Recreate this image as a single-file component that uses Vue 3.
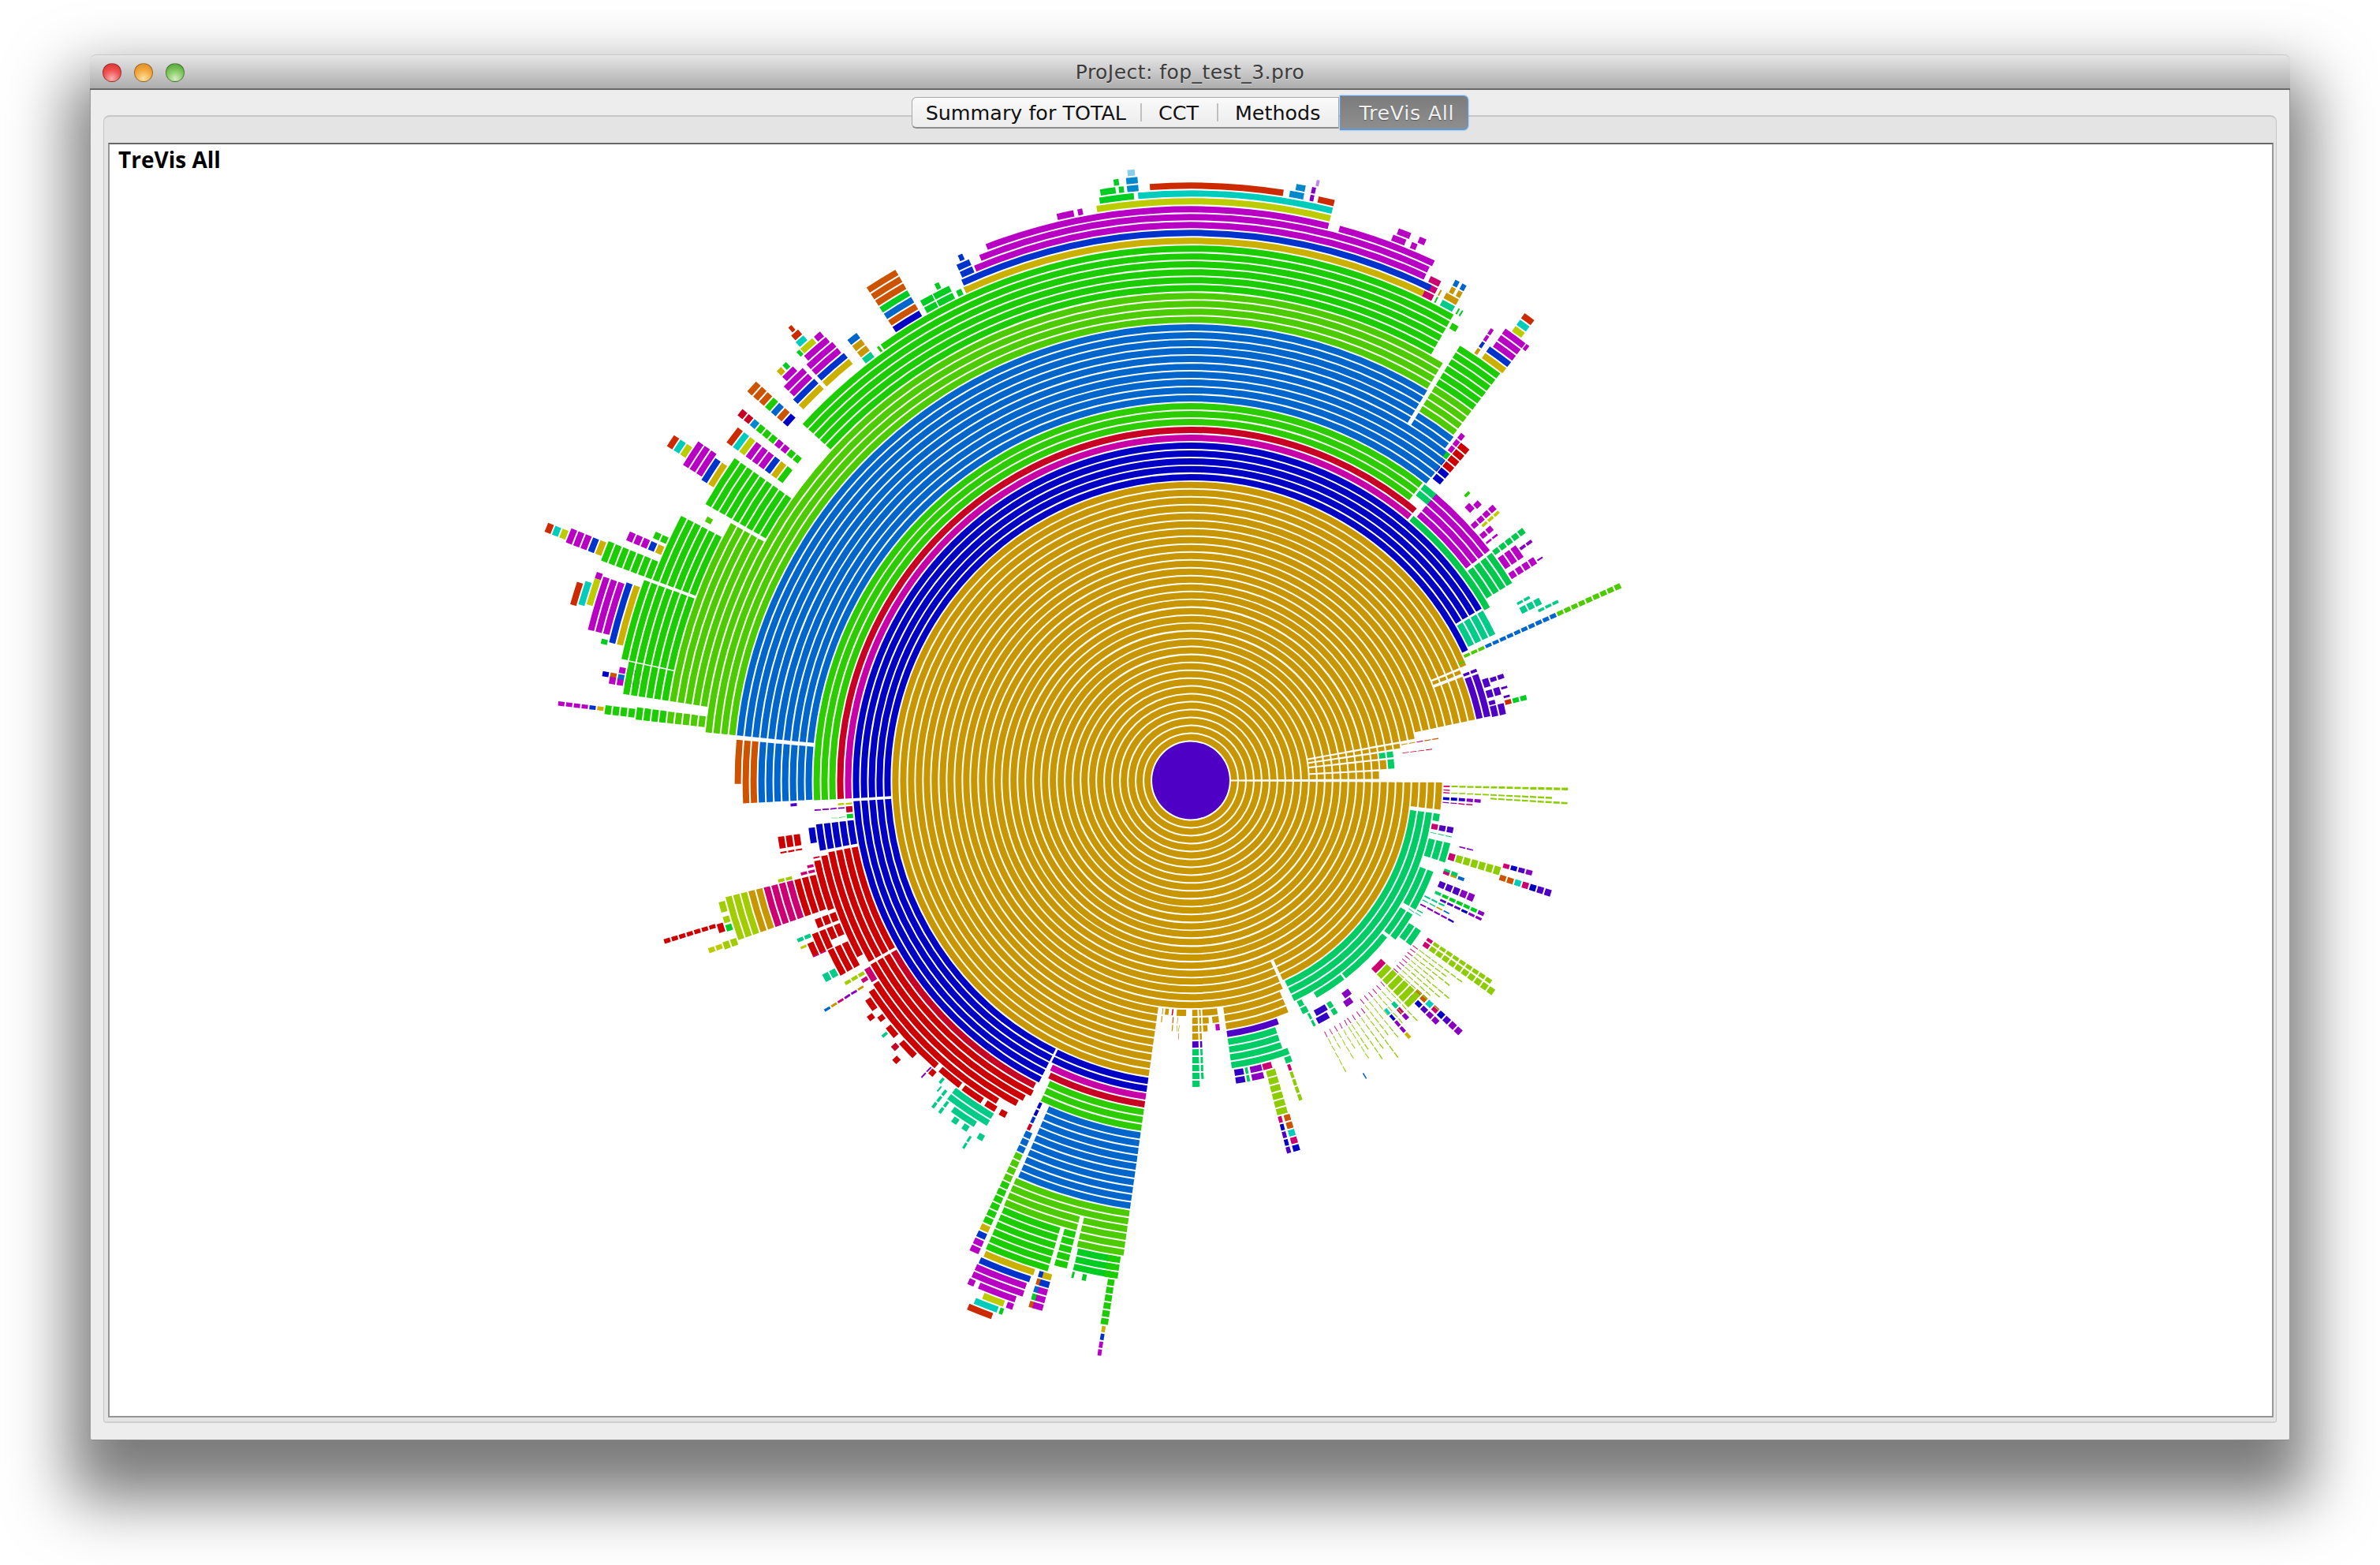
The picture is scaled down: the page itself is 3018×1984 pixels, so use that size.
<script setup>
const CX = 1510.5, CY = 990, BASE = 55, STEP = 10, GAP = 0.75
const palette = {
  A:'#c89600', B:'#0000c4', M:'#c800a8', C:'#c80024', g:'#2ccc00', L:'#0066cc', l:'#4ccc00', h:'#1acc00',
  y:'#ccb000', d:'#0033cc', m:'#b800c4', o:'#bccc00', t:'#00ccbb', r:'#cc2a00', O:'#cc5400', R:'#cc0000',
  s:'#00cc66', T:'#00cc88', p:'#4e00c4', P:'#8ccc00', k:'#cc0070', v:'#8800c0', e:'#00cc22', i:'#3000c4',
  j:'#0088cc', J:'#88ccee', a:'#a0cc00', V:'#c088ee', f:'#00c84c'
}
const rows = [
  // gold core
  [0.3,359.7,0,'A10'],[0.3,349.6,10,'A10'],[0.3,65.4,20,'A3'],[66,349.6,20,'A3'],[0.3,6.8,23,'A4'],[66,349.6,23,'A'],
  [98,348,24,'A4'],[98,337.4,28,'A4'],[98,337.4,32,'A'],[337.6,338.6,28,'A4'],[339,348,28,'A4'],[339.5,348,32,'p2'],[338.5,339.3,32,'p2'],
  [349.8,351.4,10,'A12'],[351.6,353.6,10,'A9 s2'],[353.8,356.8,10,'A10 s'],[357,359.7,10,'A9'],[350.1,350.6,22,'A2 k O2'],[352.4,352.8,22,'C4'],
  [67,82,24,'A3'],[70,82,27,'p'],[71,82,28,'s4'],[79.6,81.6,32,'i2'],[78.7,79.5,32,'s2'],[76,78.5,32,'v2'],[68.5,69.3,24,'A3'],
  [74,76,32,'k'],[73.6,75.6,33,'P6'],[73.4,74.6,39,'O O t k B'],[74.8,75.6,39,'k B p B p'],[70,71.5,31,'s2'],[70.6,71.4,33,'k P4'],
  [95.3,96.5,24,'A'],[96.7,97.2,24,'A2'],[94.2,94.8,24,'C'],[91,93.6,24,'A'],[94,94.5,25,'O A'],[93,93.3,25,'A2'],[92.6,92.9,26,'A O'],
  [83.3,87.3,24,'A'],[88.2,89.8,24,'A4 p s5'],[87.4,88.1,24,'A4 p s4'],[85.6,87.3,25,'A'],[86,87.3,26,'A'],[83.2,85,25,'A'],[83.2,84.4,26,'m'],
  // seagreen sector
  [7.5,65,23,'s3'],[7.5,9.5,26,'s'],[13.5,18,26,'s3'],[19,20,29,'s2'],[20.5,30,26,'s2'],[31,38,26,'s2'],[38.5,52,26,'s'],[52.2,60,26,'s'],[33,37,28,'s2'],[63,64.5,26,'s2'],
  [1,1.6,27,'k P15'],[1.9,2.4,27,'k'],[2.5,3,27,'k P13'],[3.2,3.7,33,'P10'],[3.6,4.5,27,'B2 i v2'],[4.7,5.2,27,'v2 k2'],
  [10,11.5,26,'k p2'],[12,12.4,26,'s3'],[13.6,14.1,30,'v2'],[15.5,17.2,29,'k P6'],[14.7,15.7,36,'k B p v'],[16.8,18,36,'O2 t k B p2'],
  [19.5,20.4,29,'k A L'],[21.8,23.4,29,'p3 v2'],[24.1,25,29,'s e5 v'],[25.2,25.9,30,'p3 B v2'],[27,27.5,28,'T2 A L'],[28,28.6,28,'v2 v2 i'],[26,26.6,28,'T2 T'],
  [29.5,30,27,'s2'],[30.3,30.7,27,'T2'],
  // east fans
  [34.4,35.6,31,'k P10'],[33.4,34.3,31,'k P9'],[43,46.3,28,'k P6'],[43.9,45,34,'k B p v2'],[42.5,43.7,34,'O2 t k B p v2'],
  [52.8,54.8,28,'v'],[53.6,55.6,29,'v'],[59,62,28,'i'],[59.5,62.4,29,'i'],[57.5,58.8,28,'s2'],[49.2,50,33,'t B v2 y'],[47.2,48.2,33,'T k v'],
  [59.3,59.7,38,'L'],[62.8,63.6,27,'s3'],
  ...fan(36.4,42.6,8,30,'k P7',0.4),...fan(46.5,52,6,30,'k P6',0.38),...fan(53,56.4,4,31,'k P7',0.38),...fan(57.2,61.8,5,31,'k P5',0.34),
  // trunk blue
  [116.6,176.6,33,'B5'],[176.9,334.9,33,'B'],[176.9,329.5,34,'B4'],[98,116.4,33,'B2'],[329.7,334.4,34,'T4'],
  [335.2,336,33,'l3 L10 l9'],[336.2,336.8,32,'l'],[331.3,331.9,42,'T2'],[332.2,333.4,42,'T3'],[333.7,334.3,44,'T3'],
  [340.8,342.6,34,'p'],[343,344.6,34,'p2'],[345,346,34,'p'],[346,348,34,'p2'],[341,342,35,'p2'],[343.2,343.8,36,'p'],[344.8,345.4,36,'p'],[345.6,346.6,36,'r e2'],[347.6,348.2,34,'p2'],
  // south wedge
  [98,116,35,'M'],[98,115.7,36,'C'],[98,115.2,37,'g3'],[98,113.6,40,'L10'],[114.6,115.3,40,'B2 d C'],[114.1,115.3,44,'L3 l4 h6 y d m2'],
  [98,113.8,50,'l2'],[104.2,113.8,52,'l2'],[98,103.8,52,'l4'],[98.8,103.6,56,'e3'],[106.2,113.7,54,'h6'],[104.2,105.8,54,'h5'],
  [98.3,100,56,'h3'],[98.6,99.5,59,'h6'],[98.8,99.3,65,'y d m2'],[103.2,103.6,59,'e'],[101.8,102.4,59,'e'],
  [107.6,113.6,60,'y'],[107.8,113.8,61,'d'],[108,113.9,62,'m2'],[108.6,112.8,64,'m'],[113.2,114,64,'m'],[109.6,112,65,'o'],[108.6,109.4,65,'m'],[110,112.6,66,'t'],[109.4,109.9,66,'e'],[110.3,113,67,'r'],
  [106.6,107.2,60,'d O L e O'],[105.6,106.8,60,'y d m3'],
  // red southwest
  [117,150.2,38,'C'],[116.8,150.2,39,'R'],[117.6,150.2,40,'R'],[118.2,150.2,41,'R'],[121,147.4,42,'R'],[127,131,43,'R'],[131.6,146.8,43,'R'],[118.8,120,43,'R'],[120.6,122.5,43,'R'],[123,126.6,43,'R'],
  [135,138,44,'R'],[139,141,44,'R'],[142,143,44,'R'],[144,146,44,'R'],[136,137,46,'R'],[143,144,45,'R'],[140,140.6,45,'T'],[137.5,138.5,45,'C'],
  [120.5,127.5,44,'T2'],[122,126,46,'T'],[120,121,47,'T'],[122.5,123.5,47,'T'],[124.2,125.2,47,'T'],[126.8,127.4,46,'T2'],[128,128.6,45,'T2 T'],[129,129.4,45,'T'],[132,132.4,43,'v3'],[131,132,44,'R'],[129.4,130,44,'T'],[121.5,122,48,'T2'],
  [150.5,168.9,38,'R4'],[152,168.5,42,'R'],[160.2,168,43,'R'],[160.5,166,43,'R4 k4 A2 a3'],[164.2,165.6,56,'a'],[162.9,163.8,56,'a'],[161.9,162.8,56,'e'],[162,163.2,57,'R'],[162.7,163.3,58,'R7'],
  [160,161,56,'a2'],[160.2,160.9,58,'o2'],[166.2,166.8,43,'k3'],[167,167.6,43,'k2'],[166,166.6,47,'a2'],[168.2,168.6,43,'C'],
  [158.3,159.8,43,'R3'],[156,158,43,'R4'],[150.8,155,43,'R3'],[155,157,45,'R3'],[157.5,158.2,47,'T2'],[156.5,157,47,'o2'],[154.8,155.2,46,'k2'],[151,152.3,46,'T2'],
  [147.6,150,42,'k'],[148.2,149,43,'k'],[149.2,149.9,43,'a3'],[147.6,148.1,44,'A v2 k A L'],
  [169.2,173.4,38,'B5'],[170.5,173,43,'B'],[170.5,172.3,45,'R3'],[169.8,170.2,45,'R3'],[173.6,174.5,38,'e'],[174.6,175.8,38,'C'],[175.3,175.7,39,'v4'],[173.9,174.1,39,'e2'],[175.9,176.4,38,'o2'],
  // west column
  [176.9,309.8,38,'M C'],[176.9,308,40,'g3'],[308.2,311,41,'s2'],[177,185.2,43,'L7'],[177,185.2,50,'O2'],[179.5,185.2,52,'O'],[176.2,176.8,45,'p'],
  [185.6,308.5,43,'L5'],[185.6,301.3,48,'L2'],[301.7,307.5,48,'L2'],[185.6,301.3,50,'L3'],[301.7,307.3,50,'l4 h6'],[185.6,301.2,53,'l4'],
  [222.5,299.5,57,'h5'],[234.5,299.5,62,'h'],
  [188.6,209.3,57,'l5'],[186.2,187.6,57,'l5 h4'],[186.4,187.4,66,'h4'],[186.7,187.2,70,'y d m4'],[188.6,192,62,'h6'],[190,190.6,68,'L O B'],[189.4,190.2,65,'y d m3'],[190.6,191.3,65,'y d m2'],[191.4,191.9,66,'h2'],
  [192,200.2,62,'h7'],[193.3,199.4,69,'y d'],[194,199.2,71,'m3'],[196.2,198.8,74,'o'],[196,198.3,75,'t'],[195.8,198,76,'r'],[193,193.6,71,'e'],[198.7,199.4,74,'m'],
  [200.4,207.5,62,'h6'],[200.4,202.4,68,'h7'],[200.8,202.2,75,'y d m3'],[201,201.9,80,'o t r'],[203,204,68,'y d m3'],[204.2,205,68,'h2'],[208,208.7,64,'l'],
  [209.6,215.3,57,'h9'],[211.5,214.2,66,'y d'],[211.8,214.6,68,'m3'],[212.5,213.8,71,'o t r'],[212,212.6,68,'m'],
  [216,218,59,'h y d m3 o t r'],[218.8,219.7,59,'h2 m2 h3 j C2'],[221.2,222.6,63,'B O L h O3'],
  [223.7,226.9,63,'y d'],[224,226.8,65,'m2'],[224.6,226.2,67,'m'],[224.6,225.3,68,'y'],[225.4,226,68,'e'],
  [227.2,231,63,'y d'],[227.2,230.8,65,'m2'],[227.6,230.6,67,'m'],[227.8,229.5,68,'o'],[229.6,230.5,68,'m'],[227.3,227.8,68,'e'],[227.9,229,69,'t'],[228,229,70,'r'],[228.3,228.8,71,'r'],
  [232,233.3,61,'h T A2 L'],[234,234.4,62,'h'],[236.6,240,63,'B O L e O3'],
  [240.5,242,63,'e2'],[242,244,63,'e2'],[242.6,243.2,65,'e'],[244.3,245,63,'e'],[245.2,245.7,63,'e'],[245.5,247,65,'d2'],[246,246.6,67,'d'],
  // top stack
  [245.2,295.6,63,'y'],[245.3,296,64,'d'],[247.1,295,65,'m'],[248,295,66,'m'],[249,284,67,'m'],[285,295.2,67,'m'],
  [260.6,284,68,'o'],[264.8,284,69,'t'],[266,279,70,'r'],[279.5,281,70,'j'],[281.5,282,70,'v'],[282.3,284,70,'r'],[280,281,71,'j'],[281.5,282,71,'v'],[281.8,282.2,72,'V'],
  [256.6,258.4,68,'m'],[258.7,259.3,68,'m'],[261,264.5,69,'e'],[261.2,262.8,70,'e'],[263,263.6,70,'e'],[263.8,265,70,'j'],[262.6,263.2,71,'e'],[263.8,265,71,'j'],[264,264.8,72,'J'],
  [290.3,291.8,68,'m'],[290.6,292,69,'m'],[292.3,293,68,'m'],[292.8,293.6,69,'m'],
  [295.4,296.7,63,'k3'],[296.9,297.2,63,'e A'],[297.6,299.2,63,'T A'],[298.6,299.2,65,'A L'],[297.8,298.4,65,'A L'],[299.5,299.8,63,'e'],[299.9,300.2,63,'e'],[299.7,300.6,61,'h'],
  // NE spike
  [302.6,307.2,54,'h'],[302.2,307.2,55,'h5'],[302,303.2,59,'h'],[304.5,307.5,60,'y d'],[304.8,307.5,62,'m3'],[305.5,306.8,65,'o t r'],[303.5,304,60,'A d m2'],[307.5,308,64,'m'],
  [307.8,308.6,45,'B2 e m3'],[308.6,310.2,44,'B2 R4'],
  // east of blue
  [310,330,38,'f'],[310.5,322.5,39,'m4'],[322.8,328.5,39,'f4'],[322.6,323.6,43,'f5'],[324,326.2,43,'m3'],[324.6,325.2,46,'v2'],[326.8,328,43,'m4'],[327.4,327.8,47,'v'],
  [313.7,314.3,45,'g'],[315,316.3,44,'m'],[315.6,316.6,45,'m'],[317.5,318.5,43,'m2 m2'],[318.6,319.2,44,'o3'],[319.5,320.5,42,'m3'],[321,321.5,43,'m2']
]
function fan(a0, a1, count, k0, seq, w) {
  const out = []
  const trims = [0, 2, 1, 3, 0, 1, 2, 0, 3]
  for (let i = 0; i < count; i++) {
    const a = a0 + (a1 - a0) * (count === 1 ? 0 : i / (count - 1))
    const cut = trims[i % trims.length]
    out.push([a, a + w, k0, cut ? seq.replace(/(\d+)$/, (_, n) => String(Math.max(1, +n - cut))) : seq])
  }
  return out
}
const buckets = {}
const rad = (a) => (a * Math.PI) / 180
for (const [a0, a1, k0, seq] of rows) {
  let k = k0
  for (const m of seq.matchAll(/([A-Za-z])(\d*)/g)) {
    const n = m[2] ? +m[2] : 1
    for (let j = 0; j < n; j++, k++) {
      const r = BASE + STEP * k
      const pad = Math.min(GAP / r, (rad(a1 - a0)) * 0.3)
      const t0 = rad(a0) + pad, t1 = rad(a1) - pad
      const big = t1 - t0 > Math.PI ? 1 : 0
      const d = `M${(CX + r * Math.cos(t0)).toFixed(1)} ${(CY + r * Math.sin(t0)).toFixed(1)}A${r} ${r} 0 ${big} 1 ${(CX + r * Math.cos(t1)).toFixed(1)} ${(CY + r * Math.sin(t1)).toFixed(1)}`
      ;(buckets[m[1]] ||= []).push(d)
    }
  }
}
const arcs = Object.entries(buckets).map(([c, ds]) => ({ id: c, color: palette[c], d: ds.join('') }))
const tabs = ['Summary for TOTAL', 'CCT', 'Methods']
</script>

<template>
  <div class="page">
    <div class="window">
      <div class="titlebar">
        <div class="lights">
          <span class="light red"></span>
          <span class="light amber"></span>
          <span class="light green"></span>
        </div>
        <div class="title">ProJect: fop_test_3.pro</div>
      </div>
      <div class="body">
        <div class="tabs">
          <div class="tabgroup">
            <div v-for="t in tabs" :key="t" class="tab">{{ t }}</div>
          </div>
          <div class="tab selected">TreVis All</div>
        </div>
        <div class="panel">
          <div class="content">
            <svg class="chart" viewBox="138 183 2745 1613" xmlns="http://www.w3.org/2000/svg">
              <circle :cx="CX" :cy="CY" r="49" fill="#4e00c4" />
              <path v-for="a in arcs" :key="a.id" :d="a.d" :stroke="a.color" stroke-width="8" fill="none" />
            </svg>
            <div class="label">TreVis All</div>
          </div>
        </div>
      </div>
    </div>
  </div>
</template>

<style>
html, body { margin: 0; background: #fff; }
</style>

<style scoped>
.page {
  width: 3018px;
  height: 1984px;
  box-sizing: border-box;
  padding: 69px 114px 158px;
  overflow: hidden;
  background: #fff;
}
.window {
  height: 100%;
  display: flex;
  flex-direction: column;
  background: #ededed;
  border-radius: 8px 8px 3px 3px;
  box-shadow: 0 50px 80px 25px rgba(0, 0, 0, 0.52);
  font-family: "DejaVu Sans", sans-serif;
}
.titlebar {
  height: 45px;
  flex: none;
  position: relative;
  display: flex;
  align-items: center;
  justify-content: center;
  box-sizing: border-box;
  border-top: 1px solid #c8c8c8;
  border-bottom: 2px solid #686868;
  border-radius: 8px 8px 0 0;
  background: linear-gradient(#e6e6e6, #adadad);
}
.lights {
  position: absolute;
  left: 16px;
  top: 10px;
  display: flex;
  gap: 16px;
}
.light {
  width: 24px;
  height: 24px;
  border-radius: 50%;
  box-sizing: border-box;
  border: 1px solid rgba(0, 0, 0, 0.35);
}
.red { background: radial-gradient(circle at 50% 85%, #f8b0b0 0, #f05050 50%, #d83030 100%); }
.amber { background: radial-gradient(circle at 50% 85%, #fae2a0 0, #f5a840 50%, #d88a20 100%); }
.green { background: radial-gradient(circle at 50% 85%, #d6eec0 0, #80c860 50%, #4e9a30 100%); }
.title {
  font-size: 25px;
  letter-spacing: 0.45px;
  color: #3c3c3c;
  text-shadow: 0 1px 0 rgba(255, 255, 255, 0.4);
}
.body {
  flex: 1;
  min-height: 0;
  display: flex;
  flex-direction: column;
  padding: 9px 16px 21px 16px;
  border-left: 1px solid #9a9a9a;
  border-right: 1px solid #9a9a9a;
  border-bottom: 1px solid #8a8a8a;
  border-radius: 0 0 3px 3px;
}
.tabs {
  flex: none;
  height: 40px;
  display: flex;
  justify-content: center;
  align-items: center;
  position: relative;
  z-index: 1;
  font-size: 25.4px;
}
.tabgroup {
  display: flex;
  height: 40px;
  box-sizing: border-box;
  background: linear-gradient(#fafafa, #ececec);
  border: 1px solid #a8a8a8;
  border-bottom: 2px solid #8c8c8c;
  border-radius: 6px 0 0 6px;
}
.tab {
  display: flex;
  align-items: center;
  padding: 0 23px;
  color: #111;
  position: relative;
  white-space: nowrap;
}
.tab:first-child { padding: 0 18px 0 17px; }
.tab + .tab::before {
  content: "";
  position: absolute;
  left: 0;
  top: 7px;
  bottom: 7px;
  width: 2px;
  background: #c0c0c0;
}
.tab.selected {
  height: 44px;
  box-sizing: border-box;
  margin-left: 1px;
  padding: 0 17px 0 23px;
  letter-spacing: 0.7px;
  color: #f0f0f0;
  background: linear-gradient(#7c7c7c, #8e8e8e);
  border: 1px solid #5f9ad8;
  border-bottom: 2px solid #5f9ad8;
  border-radius: 0 6px 6px 0;
  box-shadow: 0 0 2px #5ea0e0;
  text-shadow: 0 1px 1px #555;
}
.panel {
  flex: 1;
  min-height: 0;
  margin-top: -17px;
  display: flex;
  box-sizing: border-box;
  padding: 33px 3px 5px 5px;
  background: #e4e4e4;
  border: 1px solid #c6c6c6;
  border-top: 2px solid #c8c8c8;
  border-bottom: 2px solid #cfcfcf;
  border-radius: 8px 8px 4px 4px;
}
.content {
  flex: 1;
  min-width: 0;
  position: relative;
  background: #fff;
  border: 2px solid #969696;
  border-top: 2px solid #666;
  overflow: hidden;
}
.chart {
  display: block;
  width: 100%;
  height: 100%;
}
.label {
  position: absolute;
  left: 11px;
  top: 0;
  font-family: "Open Sans", sans-serif;
  font-weight: 700;
  font-size: 28px;
  color: #000;
}
</style>
